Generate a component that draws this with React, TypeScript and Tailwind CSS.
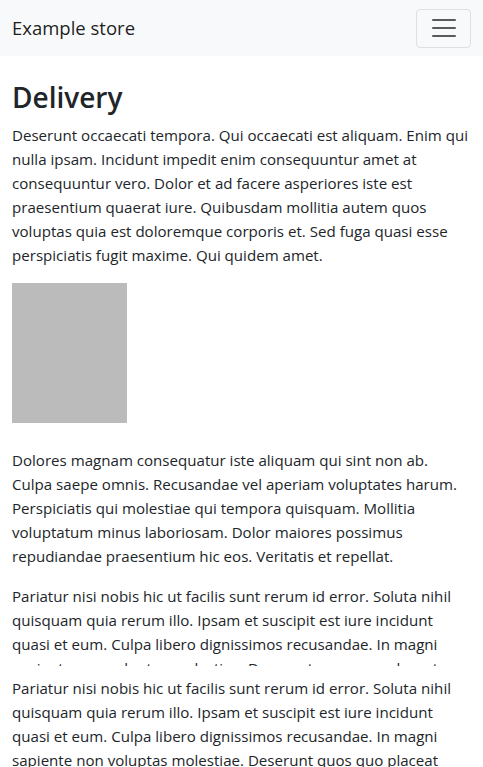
import React from 'react';

const p1 =
  'Deserunt occaecati tempora. Qui occaecati est aliquam. Enim qui nulla ipsam. Incidunt impedit enim consequuntur amet at consequuntur vero. Dolor et ad facere asperiores iste est praesentium quaerat iure. Quibusdam mollitia autem quos voluptas quia est doloremque corporis et. Sed fuga quasi esse perspiciatis fugit maxime. Qui quidem amet.';
const p2 =
  'Dolores magnam consequatur iste aliquam qui sint non ab. Culpa saepe omnis. Recusandae vel aperiam voluptates harum. Perspiciatis qui molestiae qui tempora quisquam. Mollitia voluptatum minus laboriosam. Dolor maiores possimus repudiandae praesentium hic eos. Veritatis et repellat.';
const p3 =
  'Pariatur nisi nobis hic ut facilis sunt rerum id error. Soluta nihil quisquam quia rerum illo. Ipsam et suscipit est iure incidunt quasi et eum. Culpa libero dignissimos recusandae. In magni sapiente non voluptas molestiae. Deserunt quos quo placeat voluptatem. Aut aut et ut est.';

export default function App() {
  return (
    <div className="h-[767px] overflow-hidden bg-white text-[#212529] text-[15.1px] leading-6 font-['Open_Sans',sans-serif]">
      <div className="h-[666px] overflow-hidden">
        {/* Navbar */}
        <nav className="h-14 bg-[#f8f9fa] px-3 flex items-center justify-between">
          <span className="text-[18.5px] leading-[30px] text-[#000000e6]">Example store</span>
          <button className="w-[55px] h-[39px] border border-[#0000001a] rounded flex items-center justify-center">
            <svg width="30" height="30" viewBox="0 0 30 30">
              <path
                d="M4 7h22M4 15h22M4 23h22"
                stroke="rgba(33,37,41,0.75)"
                strokeWidth="2"
                strokeLinecap="round"
              />
            </svg>
          </button>
        </nav>

        <main className="px-3 pt-6">
          <h1 className="text-[28px] leading-[35px] font-semibold mb-2">Delivery</h1>
          <p className="mb-4">{p1}</p>
          <div className="w-[115px] h-[140px] bg-[#bbbbbb] mb-[25px]" />
          <p className="mb-4">{p2}</p>
          <p className="mb-4">{p3}</p>
        </main>
      </div>
      <div className="px-3 pt-[10px]">
        <p>{p3}</p>
      </div>
    </div>
  );
}
